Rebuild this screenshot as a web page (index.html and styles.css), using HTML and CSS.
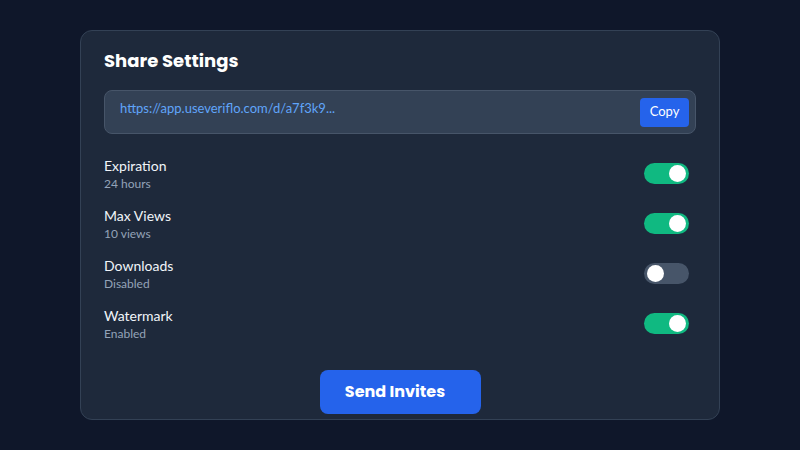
FILE: index.html
```html
<!DOCTYPE html>
<html>
<head>
<meta charset="utf-8">
<link rel="stylesheet" href="styles.css">
</head>
<body>
<div class="card">
  <h1 class="title">Share Settings</h1>
  <div class="link-box">
    <span class="link">https://app.useveriflo.com/d/a7f3k9...</span>
    <button class="copy">Copy</button>
  </div>
  <div class="rows">
    <div class="row">
      <div class="info"><div class="label">Expiration</div><div class="sub">24 hours</div></div>
      <div class="toggle on"><span class="knob"></span></div>
    </div>
    <div class="row">
      <div class="info"><div class="label">Max Views</div><div class="sub">10 views</div></div>
      <div class="toggle on"><span class="knob"></span></div>
    </div>
    <div class="row">
      <div class="info"><div class="label">Downloads</div><div class="sub">Disabled</div></div>
      <div class="toggle"><span class="knob"></span></div>
    </div>
    <div class="row">
      <div class="info"><div class="label">Watermark</div><div class="sub">Enabled</div></div>
      <div class="toggle on"><span class="knob"></span></div>
    </div>
  </div>
  <div class="actions"><button class="send">Send Invites</button></div>
</div>
</body>
</html>
```
FILE: styles.css
```css
* { box-sizing: border-box; }
html, body { margin: 0; padding: 0; }
body {
  width: 800px;
  height: 450px;
  background: #0f172a;
  font-family: Lato, "Noto Sans", sans-serif;
  padding-top: 30px;
  overflow: hidden;
}
.card {
  width: 640px;
  height: 390px;
  margin: 0 auto;
  background: #1e293b;
  border: 1px solid #334155;
  border-radius: 12px;
  padding: 22px 23px 0 23px;
}
.title {
  margin: 0;
  font-family: Poppins, "Open Sans", sans-serif;
  font-weight: 700;
  font-size: 18px;
  line-height: 16px;
  color: #ffffff;
  height: 16px;
}
.link-box {
  margin-top: 21px;
  height: 44px;
  background: #334155;
  border: 1px solid #475569;
  border-radius: 8px;
  display: flex;
  align-items: flex-start;
  justify-content: space-between;
  padding: 7px 6px 0 15px;
}
.link {
  color: #60a5fa;
  font-size: 13px;
  line-height: 20px;
}
.copy {
  background: #2563eb;
  color: #fff;
  border: none;
  border-radius: 4px;
  font-family: Lato, sans-serif;
  font-size: 13px;
  line-height: 22px;
  height: 29px;
  width: 49px;
  padding: 0 0 4px 0;
}
.rows {
  margin-top: 22px;
  display: flex;
  flex-direction: column;
  gap: 14px;
}
.row {
  display: flex;
  align-items: center;
  justify-content: space-between;
  height: 36px;
}
.label {
  color: #f1f5f9;
  font-size: 14px;
  line-height: 20px;
}
.sub {
  color: #94a3b8;
  font-size: 12px;
  line-height: 16px;
}
.toggle {
  width: 45px;
  height: 21px;
  border-radius: 11px;
  background: #475569;
  display: flex;
  align-items: center;
  padding: 0 3px;
  margin-bottom: 2px;
  margin-right: 7px;
}
.toggle.on {
  background: #10b981;
  justify-content: flex-end;
}
.knob {
  width: 17px;
  height: 17px;
  border-radius: 50%;
  background: #ffffff;
}
.actions {
  display: flex;
  justify-content: center;
  margin-top: 28px;
}
.send {
  width: 161px;
  height: 44px;
  background: #2563eb;
  color: #fff;
  border: none;
  border-radius: 8px;
  font-family: Poppins, "Open Sans", sans-serif;
  font-weight: 700;
  font-size: 16px;
  padding: 0 10px 1px 0;
}
```
